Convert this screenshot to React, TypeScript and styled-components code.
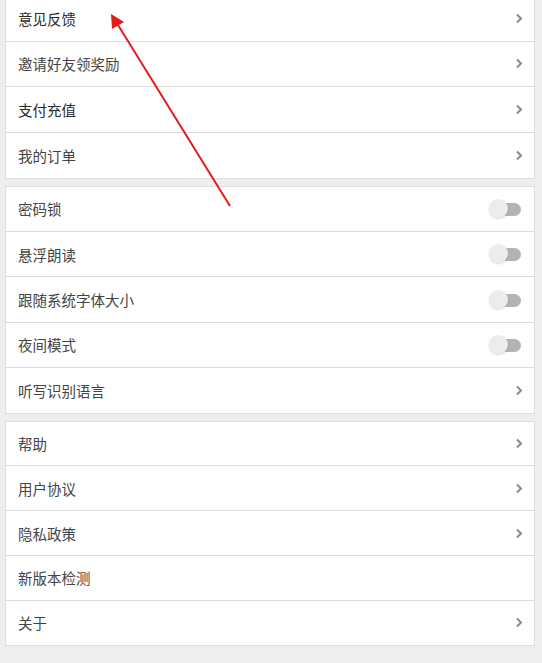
import styled, { createGlobalStyle } from 'styled-components';

const GlobalStyle = createGlobalStyle`
  html, body {
    margin: 0;
    padding: 0;
    background: #eeeeee;
  }
  body {
    font-family: "Noto Sans CJK SC", "Noto Sans", sans-serif;
  }
`;

const Page = styled.div`
  position: relative;
  width: 542px;
  height: 663px;
  overflow: hidden;
  background: #eeeeee;
  padding: 0 7px 0 5px;
  box-sizing: border-box;
  display: flex;
  flex-direction: column;
  gap: 7px;
`;

const Group = styled.div<{ $offset?: number }>`
  background: #ffffff;
  border: 1px solid #dedede;
  margin-top: ${(p) => p.$offset ?? 0}px;
  display: flex;
  flex-direction: column;
`;

const Row = styled.div<{ $h: number }>`
  box-sizing: border-box;
  height: ${(p) => p.$h}px;
  display: flex;
  align-items: center;
  justify-content: space-between;
  padding: 0 11px 0 12px;
  border-bottom: 1px solid #dcdcdc;
  &:last-child {
    border-bottom: none;
    height: ${(p) => p.$h - 1}px;
  }
`;

const Label = styled.span<{ $strong?: boolean }>`
  font-size: 14.5px;
  font-weight: 400;
  color: ${(p) => (p.$strong ? '#2a2a2a' : '#444444')};
`;

const Toggle = styled.div`
  position: relative;
  width: 32px;
  height: 20px;
  margin-right: 2px;
  &::before {
    content: '';
    position: absolute;
    right: 0;
    top: 4px;
    width: 23px;
    height: 13px;
    border-radius: 7px;
    background: #b3b3b3;
  }
  &::after {
    content: '';
    position: absolute;
    left: 0;
    top: 0;
    width: 19px;
    height: 19px;
    border-radius: 50%;
    background: #ececec;
    box-shadow: 0 1px 2px rgba(0, 0, 0, 0.15);
  }
`;

const Chevron = () => (
  <svg width="8" height="11" viewBox="0 0 8 11">
    <path d="M2 1.5 L6 5.5 L2 9.5" fill="none" stroke="#8a8a8a" strokeWidth="2" />
  </svg>
);

const Arrow = styled.svg`
  position: absolute;
  left: 0;
  top: 0;
  pointer-events: none;
`;

type Item = { label: string; kind: 'chevron' | 'toggle' | 'none'; strong?: boolean };

const groups: { offset: number; h: number; items: Item[] }[] = [
  {
    offset: -5,
    h: 45.67,
    items: [
      { label: '意见反馈', kind: 'chevron', strong: true },
      { label: '邀请好友领奖励', kind: 'chevron' },
      { label: '支付充值', kind: 'chevron', strong: true },
      { label: '我的订单', kind: 'chevron' },
    ],
  },
  {
    offset: 0,
    h: 45.4,
    items: [
      { label: '密码锁', kind: 'toggle' },
      { label: '悬浮朗读', kind: 'toggle' },
      { label: '跟随系统字体大小', kind: 'toggle' },
      { label: '夜间模式', kind: 'toggle' },
      { label: '听写识别语言', kind: 'chevron' },
    ],
  },
  {
    offset: 0,
    h: 44.8,
    items: [
      { label: '帮助', kind: 'chevron' },
      { label: '用户协议', kind: 'chevron' },
      { label: '隐私政策', kind: 'chevron' },
      { label: '新版本检测', kind: 'none' },
      { label: '关于', kind: 'chevron' },
    ],
  },
];

export default function App() {
  return (
    <>
      <GlobalStyle />
      <Page>
        {groups.map((g, gi) => (
          <Group key={gi} $offset={g.offset}>
            {g.items.map((it) => (
              <Row key={it.label} $h={g.h}>
                <Label $strong={it.strong}>{it.label}</Label>
                {it.kind === 'chevron' && <Chevron />}
                {it.kind === 'toggle' && <Toggle />}
              </Row>
            ))}
          </Group>
        ))}
        <Arrow width="542" height="663" viewBox="0 0 542 663">
          <line x1="230" y1="206" x2="118" y2="25" stroke="#e31b1b" strokeWidth="2" />
          <polygon points="111,14 124,22 112,29" fill="#e31b1b" />
        </Arrow>
      </Page>
    </>
  );
}
